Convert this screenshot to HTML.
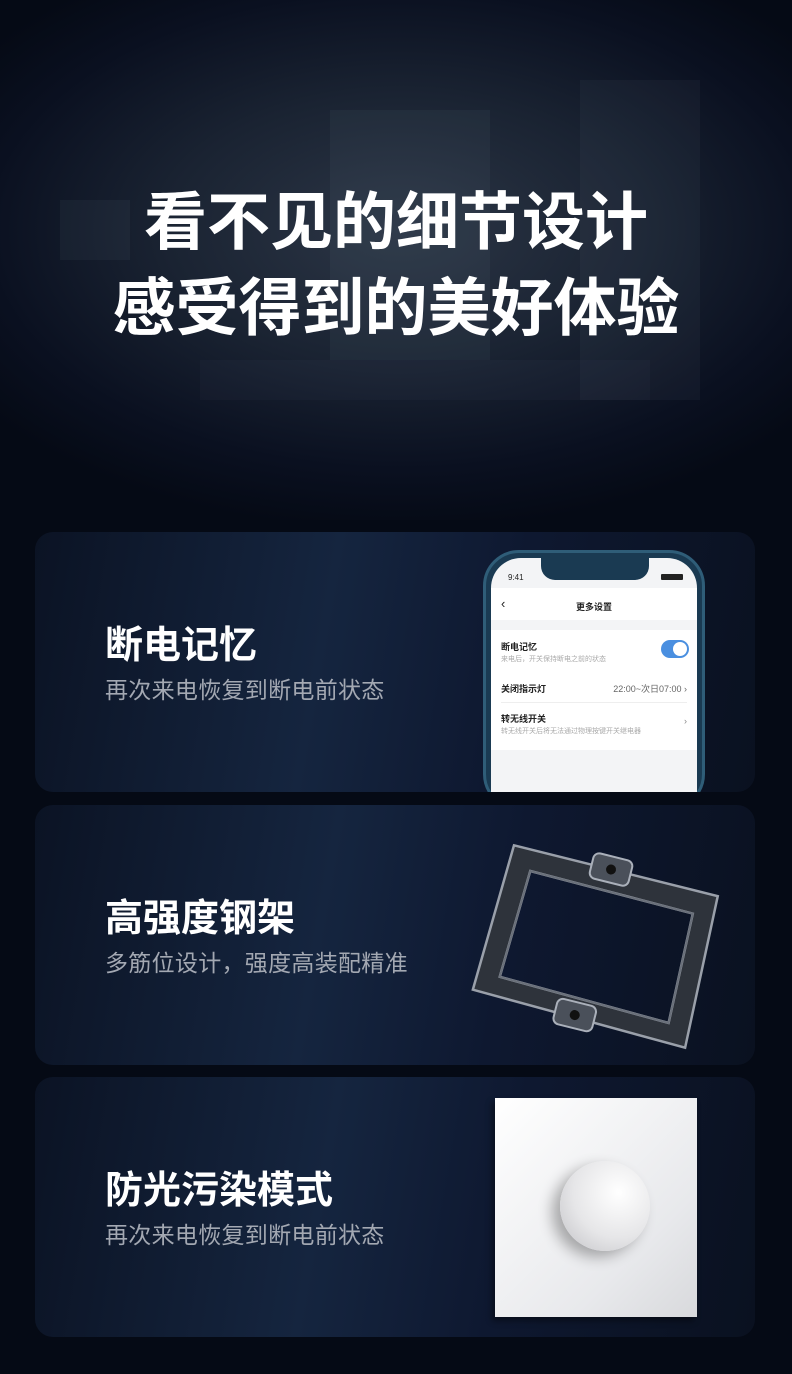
<!DOCTYPE html>
<html><head><meta charset="utf-8"><style>
*{margin:0;padding:0;box-sizing:border-box}
body{width:792px;height:1374px;background:#050a15;font-family:"Liberation Sans","Noto Sans CJK SC",sans-serif;position:relative;overflow:hidden}
.hero{position:absolute;left:0;top:0;width:792px;height:520px;background:radial-gradient(ellipse 520px 300px at 400px 230px,#2c3646 0%,#1a2332 45%,#0a1020 80%,#050a15 100%)}
.hero .w{position:absolute;background:rgba(120,135,155,.08)}
h1{position:absolute;left:0;width:792px;text-align:center;color:#fff;font-size:63px;font-weight:700;line-height:86px;top:180px}
.card{position:absolute;left:35px;width:720px;height:260px;border-radius:18px;overflow:hidden;background:linear-gradient(100deg,#0b1324 0%,#15253f 40%,#0e1830 65%,#0a1120 100%)}
.card h2{position:absolute;left:70px;color:#fff;font-size:38px;font-weight:700}
.card p{position:absolute;left:70px;color:#a3a8b2;font-size:23px;letter-spacing:.3px}
</style></head><body>
<div class="hero">
<div class="w" style="left:60px;top:200px;width:70px;height:60px"></div>
<div class="w" style="left:330px;top:110px;width:160px;height:250px"></div>
<div class="w" style="left:580px;top:80px;width:120px;height:320px;background:rgba(140,150,170,.06)"></div>
<div class="w" style="left:200px;top:360px;width:450px;height:40px;background:rgba(100,110,130,.06)"></div>
</div>
<h1>看不见的细节设计<br>感受得到的美好体验</h1>

<div class="card" style="top:532px">
<h2 style="top:82px">断电记忆</h2>
<p style="top:139px">再次来电恢复到断电前状态</p>
<div style="position:absolute;left:448px;top:18px;width:222px;height:260px;border-radius:36px;background:#1a3a52;border:3px solid #2f5d78">
<div style="position:absolute;left:5px;top:5px;right:5px;bottom:0;border-radius:30px 30px 0 0;background:#f3f4f6;overflow:hidden;font-size:9px;color:#222">
<div style="position:absolute;left:50px;top:0;width:108px;height:22px;background:#1a3a52;border-radius:0 0 14px 14px"></div>
<div style="position:absolute;left:17px;top:15px;font-size:8px">9:41</div>
<div style="position:absolute;right:14px;top:16px;width:22px;height:6px;background:#222;border-radius:1px"></div>
<div style="position:absolute;left:0;right:0;top:30px;height:32px;background:#fff"></div>
<div style="position:absolute;left:10px;top:38px;font-size:13px">‹</div>
<div style="position:absolute;left:0;right:0;top:42px;text-align:center;font-weight:700">更多设置</div>
<div style="position:absolute;left:0;right:0;top:72px;height:120px;background:#fff"></div>
<div style="position:absolute;left:10px;top:82px;font-weight:700">断电记忆</div>
<div style="position:absolute;left:10px;top:96px;font-size:7px;color:#aaa">来电后，开关保持断电之前的状态</div>
<div style="position:absolute;left:170px;top:82px;width:28px;height:18px;border-radius:9px;background:#4a8fe0"><div style="position:absolute;right:2px;top:2px;width:14px;height:14px;border-radius:50%;background:#fff"></div></div>
<div style="position:absolute;left:10px;top:124px;font-weight:700">关闭指示灯</div>
<div style="position:absolute;right:10px;top:124px;color:#666">22:00~次日07:00 ›</div>
<div style="position:absolute;left:10px;right:10px;top:144px;height:1px;background:#eee"></div>
<div style="position:absolute;left:10px;top:154px;font-weight:700">转无线开关</div>
<div style="position:absolute;left:10px;top:168px;font-size:7px;color:#aaa">转无线开关后将无法通过物理按键开关继电器</div>
<div style="position:absolute;right:10px;top:158px;color:#888">›</div>
</div></div>
</div>

<div class="card" style="top:805px">
<h2 style="top:82px">高强度钢架</h2>
<p style="top:139px">多筋位设计，强度高装配精准</p>
<svg style="position:absolute;left:420px;top:10px" width="300" height="240" viewBox="0 0 300 240">
<g transform="rotate(14 150 120)">
<path d="M40 55 L250 55 L255 210 L35 205 Z M62 76 L230 78 L233 190 L58 186 Z" fill="#2e333b" fill-rule="evenodd" stroke="#9aa0aa" stroke-width="2.5"/>
<path d="M62 76 L230 78 L233 190 L58 186 Z" fill="none" stroke="#6a707a" stroke-width="2"/>
<rect x="120" y="42" width="40" height="26" rx="6" fill="#4a505a" stroke="#aab0ba" stroke-width="2"/>
<rect x="120" y="192" width="40" height="26" rx="6" fill="#4a505a" stroke="#aab0ba" stroke-width="2"/>
<circle cx="140" cy="55" r="5" fill="#111"/><circle cx="140" cy="205" r="5" fill="#111"/>
</g></svg>
</div>

<div class="card" style="top:1077px">
<h2 style="top:82px">防光污染模式</h2>
<p style="top:139px">再次来电恢复到断电前状态</p>
<div style="position:absolute;left:460px;top:21px;width:202px;height:219px;background:linear-gradient(135deg,#ffffff,#e8e9ec 70%,#d8d9dc);box-shadow:-3px 4px 6px rgba(0,0,0,.4)">
<div style="position:absolute;left:65px;top:63px;width:90px;height:90px;border-radius:50%;background:radial-gradient(circle at 65% 35%,#fff,#e6e6e8 55%,#c0c0c4);box-shadow:-8px 6px 14px rgba(0,0,0,.3)"></div>
</div>
</div>
</body></html>
